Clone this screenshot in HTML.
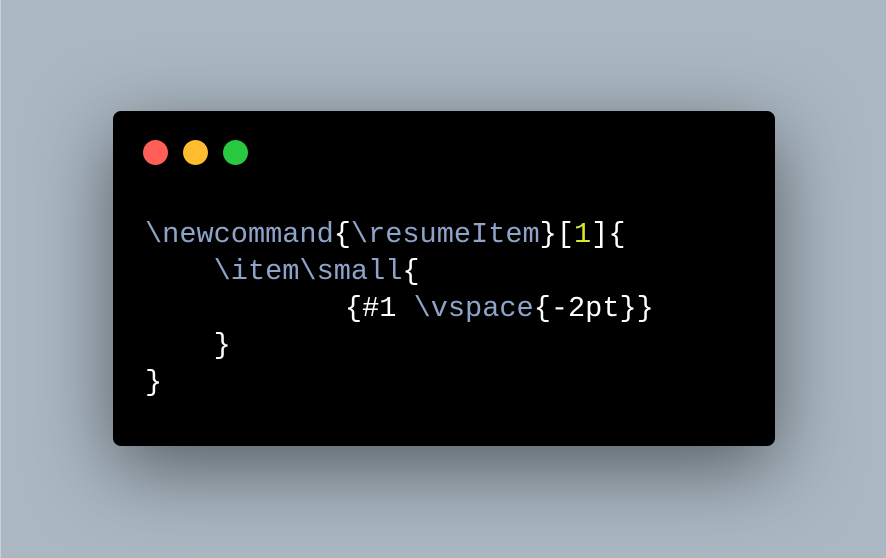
<!DOCTYPE html>
<html><head><style>
html,body{margin:0;padding:0}
body{width:886px;height:558px;background:#abb8c3;position:relative;overflow:hidden}
.edge{position:absolute;left:0;top:0;width:1px;height:558px;background:#c9d1d8}
.win{position:absolute;left:113px;top:111px;width:662px;height:335px;background:#000;border-radius:8px;box-shadow:0 22px 80px rgba(0,0,0,.5)}
.dot{position:absolute;top:29px;width:25px;height:25px;border-radius:50%}
pre{position:absolute;left:32px;top:105px;margin:0;font-family:"Liberation Mono",monospace;font-size:28.6px;line-height:37px;color:#fff}
.b{color:#8fa3c9}.y{color:#d8e82a}
.i3{margin-left:-6px}
</style></head><body>
<div class="edge"></div>
<div class="win">
<div class="dot" style="left:30px;background:#ff5f57"></div>
<div class="dot" style="left:70px;background:#febc2e"></div>
<div class="dot" style="left:110px;background:#28c840"></div>
<pre><span class="b">\newcommand</span>{<span class="b">\resumeItem</span>}[<span class="y">1</span>]{
    <span class="b">\item\small</span>{
            <span class="i3">{#1 <span class="b">\vspace</span>{-2pt}}</span>
    }
}</pre>
</div>
</body></html>
